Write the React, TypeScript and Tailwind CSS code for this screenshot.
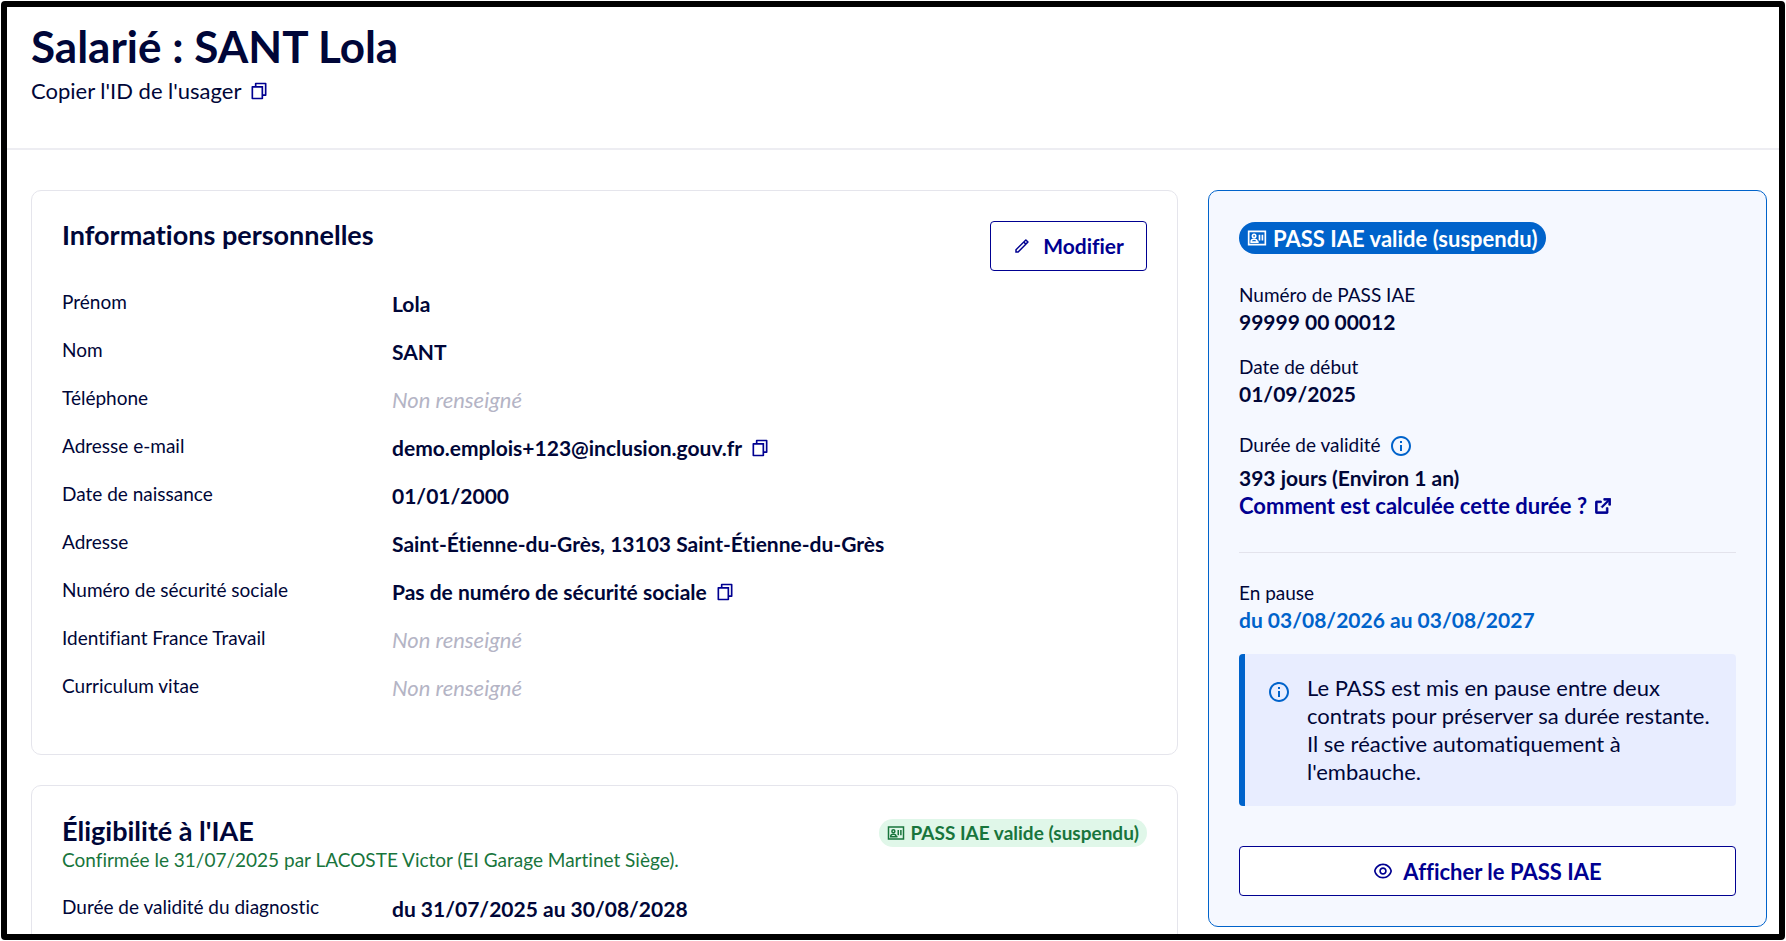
import type { ReactNode } from "react";
import { RiExternalLinkLine, RiEyeLine, RiFileCopyLine, RiInformationLine, RiPencilLine } from "react-icons/ri";

type Field = {
  label: string;
  value?: string;
  copyable?: boolean;
};

const personalFields: Field[] = [
  { label: "Prénom", value: "Lola" },
  { label: "Nom", value: "SANT" },
  { label: "Téléphone" },
  { label: "Adresse e-mail", value: "demo.emplois+123@inclusion.gouv.fr", copyable: true },
  { label: "Date de naissance", value: "01/01/2000" },
  { label: "Adresse", value: "Saint-Étienne-du-Grès, 13103 Saint-Étienne-du-Grès" },
  { label: "Numéro de sécurité sociale", value: "Pas de numéro de sécurité sociale", copyable: true },
  { label: "Identifiant France Travail" },
  { label: "Curriculum vitae" },
];

function CopyButton({ label }: { label: string }) {
  return (
    <button type="button" aria-label={label} className="inline-flex cursor-pointer text-[#000091]">
      <RiFileCopyLine className="size-5" />
    </button>
  );
}

function PassIcon({ className }: { className?: string }) {
  return (
    <svg className={className} viewBox="0 0 24 24" fill="none" stroke="currentColor" strokeWidth="2" aria-hidden="true">
      <path d="M2 4h20v16H2z" />
      <circle cx="8.5" cy="9.5" r="2" />
      <path d="M5 17.5V16c0-1.5 1.5-2.5 3.5-2.5s3.5 1 3.500 2.500v1.500M4 17h10M15 8v7M18.500 8v7" />
    </svg>
  );
}

function FieldRow({ label, value, copyable }: Field) {
  return (
    <div className="flex">
      <dt className="w-[330px] shrink-0 text-[19px] leading-[26px]">{label}</dt>
      <dd className="flex items-center gap-2 leading-[30px]">
        {value ? (
          <strong className="text-[21px] font-bold">{value}</strong>
        ) : (
          <i className="text-[22px] text-[#b4b4c5]">Non renseigné</i>
        )}
        {copyable && <CopyButton label={`Copier : ${label}`} />}
      </dd>
    </div>
  );
}

function PassField({ label, children }: { label: ReactNode; children: ReactNode }) {
  return (
    <div>
      <dt className="flex items-center gap-2 text-[19px] leading-[26px]">{label}</dt>
      <dd className="text-[21px] leading-7 font-bold">{children}</dd>
    </div>
  );
}

export default function App() {
  return (
    <div className="h-screen bg-white p-px font-['Lato',sans-serif] text-[#000638] [font-variant-ligatures:none]">
      <div className="h-full overflow-hidden rounded-sm border-6 border-black">
        {/* Header */}
        <header className="border-b-2 border-[#ededf2] px-6 pt-3 pb-[41px]">
          <h1 className="mb-0.5 text-[44px] leading-[54px] font-bold">Salarié : SANT Lola</h1>
          <p className="flex items-center gap-2 text-[22px] leading-8">
            Copier l'ID de l'usager
            <CopyButton label="Copier l'ID de l'usager" />
          </p>
        </header>

        <main className="flex items-start gap-[30px] pt-10 pr-3 pl-6">
          <div className="flex min-w-0 grow flex-col gap-[30px]">
            {/* Personal data */}
            <section className="rounded-[10px] border border-[#e5e5ec] px-[30px] pt-[30px] pb-[51px]">
              <div className="mb-[18px] flex items-start justify-between">
                <h2 className="text-[27px] leading-7 font-bold">Informations personnelles</h2>
                <button
                  type="button"
                  className="flex h-[50px] w-[157px] cursor-pointer items-center justify-center gap-3 rounded border border-[#000091] text-[21px] font-bold text-[#000091]"
                >
                  <RiPencilLine className="size-[18px]" />
                  Modifier
                </button>
              </div>
              <dl className="flex flex-col gap-[18px]">
                {personalFields.map((field) => (
                  <FieldRow key={field.label} {...field} />
                ))}
              </dl>
            </section>

            {/* Eligibility */}
            <section className="rounded-[10px] border border-[#e5e5ec] p-[30px]">
              <div className="mb-5 flex items-start justify-between">
                <div>
                  <h2 className="text-[27px] leading-[30px] font-bold">Éligibilité à l'IAE</h2>
                  <p className="text-[19px] leading-7 text-[#18753c]">
                    Confirmée le 31/07/2025 par LACOSTE Victor (EI Garage Martinet Siège).
                  </p>
                </div>
                <span className="mt-[3px] flex h-7 items-center gap-1.5 rounded-full bg-[#e0f7e9] px-2 text-[19px] font-bold text-[#18753c]">
                  <PassIcon className="size-[18px]" />
                  PASS IAE valide (suspendu)
                </span>
              </div>
              <dl>
                <FieldRow label="Durée de validité du diagnostic" value="du 31/07/2025 au 30/08/2028" />
              </dl>
            </section>
          </div>

          {/* PASS IAE */}
          <aside className="w-[559px] shrink-0 rounded-[10px] border border-[#0063cb] bg-[#f5f8ff] p-[30px]">
            <span className="mt-px inline-flex h-8 items-center gap-1.5 rounded-full bg-[#0063cb] px-2 text-[22px] font-bold text-white">
              <PassIcon className="size-5" />
              PASS IAE valide (suspendu)
            </span>
            <dl className="mt-7 flex flex-col gap-[18px]">
              <PassField label="Numéro de PASS IAE">99999 00 00012</PassField>
              <PassField label="Date de début">01/09/2025</PassField>
              <PassField
                label={
                  <>
                    Durée de validité
                    <button type="button" aria-label="En savoir plus sur la durée" className="cursor-pointer pt-2 pb-1.5 text-[#0063cb]">
                      <RiInformationLine className="size-6" />
                    </button>
                  </>
                }
              >
                393 jours (Environ 1 an)
                <a href="#duree" className="flex items-center gap-1.5 text-[22px] text-[#000091]">
                  Comment est calculée cette durée ?
                  <RiExternalLinkLine className="size-5 stroke-current stroke-1" />
                </a>
              </PassField>
            </dl>
            <hr className="mt-8 mb-[27px] border-[#e3e3ec]" />
            <dl>
              <PassField label="En pause">
                <span className="text-[#0063cb]">du 03/08/2026 au 03/08/2027</span>
              </PassField>
            </dl>
            <div className="mt-5 mb-10 flex gap-4 rounded border-l-6 border-[#0063cb] bg-[#e8edff] py-5 pr-5 pl-[22px]">
              <RiInformationLine className="mt-1.5 size-6 shrink-0 text-[#0063cb]" />
              <p className="text-[22px] leading-7">
                Le PASS est mis en pause entre deux contrats pour préserver sa durée restante. Il se réactive automatiquement à
                l'embauche.
              </p>
            </div>
            <a
              href="#pass"
              className="flex h-[50px] items-center justify-center gap-2.5 rounded border border-[#000091] bg-white text-[22px] font-bold text-[#000091]"
            >
              <RiEyeLine className="size-5" />
              Afficher le PASS IAE
            </a>
          </aside>
        </main>
      </div>
    </div>
  );
}
